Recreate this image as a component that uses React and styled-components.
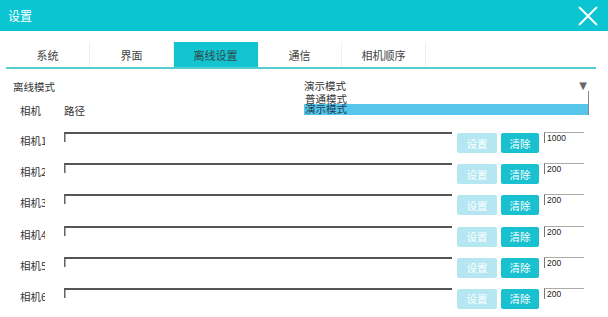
import React from "react";
import styled, { createGlobalStyle } from "styled-components";

const Global = createGlobalStyle`
  html, body { margin: 0; padding: 0; background: #fff; }
  body { font-family: "Noto Sans CJK SC", "Noto Sans", sans-serif; color: #333; }
`;

const Window = styled.div`
  width: 608px;
  height: 317px;
  overflow: hidden;
  background: #fff;
  display: flex;
  flex-direction: column;
`;

const TitleBar = styled.div`
  height: 31px;
  flex: none;
  background: #0cc5d2;
  display: flex;
  align-items: center;
  justify-content: space-between;
  padding: 0 10px 0 8px;
  box-sizing: border-box;
`;

const Title = styled.span`
  color: #fff;
  font-size: 12px;
  line-height: 1;
`;

const CloseBtn = styled.svg`
  width: 20px;
  height: 20px;
  display: block;
`;

const TabBar = styled.div`
  margin: 11px 0 0 6px;
  width: 590px;
  height: 25px;
  display: flex;
  border-bottom: 2px solid #55cdce;
  flex: none;
`;

const Tab = styled.div`
  width: 84px;
  height: 100%;
  display: flex;
  align-items: center;
  justify-content: center;
  font-size: 11px;
  color: ${p => (p.$active ? "#2f4a4d" : "#444")};
  background: ${p => (p.$active ? "#12c3d0" : "transparent")};
  border-right: 1px solid ${p => (p.$active ? "transparent" : "#f0f0f0")};
  box-sizing: border-box;
`;

const ModeRow = styled.div`
  position: relative;
  display: flex;
  align-items: center;
  height: 14px;
  margin-top: 11px;
  padding-left: 13px;
  font-size: 10.5px;
  flex: none;
`;

const ModeLabel = styled.span`
  width: 291px;
  line-height: 1;
`;

const Select = styled.div`
  position: relative;
  width: 284px;
  display: flex;
  align-items: center;
  justify-content: space-between;
  line-height: 1;
  margin-top: -2px;
`;

const Arrow = styled.span`
  color: #666;
  font-size: 10px;
  margin-right: 1px;
  font-family: "DejaVu Sans", sans-serif;
`;

const Dropdown = styled.div`
  position: absolute;
  left: 0;
  top: 10px;
  width: 284px;
  border-right: 1px solid #888;
  display: flex;
  flex-direction: column;
  z-index: 2;
`;

const Option = styled.div`
  height: ${p => (p.$selected ? "11px" : "13px")};
  display: flex;
  align-items: ${p => (p.$selected ? "center" : "flex-end")};
  font-size: 10.5px;
  line-height: 10px;
  color: ${p => (p.$selected ? "#1b3a52" : "#333")};
  background: ${p => (p.$selected ? "#55c6ea" : "#fff")};
  padding-left: 1px;
`;

const HeaderRow = styled.div`
  display: flex;
  align-items: center;
  height: 14px;
  margin-top: 10px;
  padding-left: 20px;
  font-size: 10.5px;
  flex: none;
`;

const HeaderCell = styled.span`
  width: ${p => p.$w}px;
  line-height: 1;
`;

const Rows = styled.div`
  display: grid;
  grid-auto-rows: 31.2px;
  margin-top: 14px;
  padding-left: 20px;
`;

const Row = styled.div`
  display: flex;
  align-items: flex-start;
`;

const CamLabel = styled.div`
  width: 25px;
  margin-right: 19px;
  overflow: hidden;
  white-space: nowrap;
  font-size: 10.5px;
  line-height: 1;
  margin-top: 4px;
`;

const PathInput = styled.div`
  width: 388px;
  height: 10px;
  border-top: 2px solid #555;
  border-left: 1px solid #666;
  box-shadow: inset 1px 0 0 #aaa;
  box-sizing: border-box;
`;

const Btn = styled.div`
  margin-top: 1px;
  height: 20px;
  border-radius: 2px;
  display: flex;
  align-items: center;
  justify-content: center;
  font-size: 10.5px;
  color: #fff;
  background: ${p => (p.$light ? "#b4e7f1" : "#19c0cf")};
  margin-left: ${p => p.$ml}px;
  width: ${p => p.$w}px;
  flex: none;
`;

const NumBox = styled.div`
  margin-left: 5px;
  width: 37px;
  height: 10px;
  border-top: 1px solid #aaa;
  border-left: 1px solid #777;
  font-family: "Liberation Sans", sans-serif;
  font-size: 8.5px;
  line-height: 10px;
  padding-left: 2px;
  color: #222;
  overflow: hidden;
  box-sizing: content-box;
  flex: none;
`;

const cams = [
  { n: 1, v: "1000" },
  { n: 2, v: "200" },
  { n: 3, v: "200" },
  { n: 4, v: "200" },
  { n: 5, v: "200" },
  { n: 6, v: "200" },
  { n: 7, v: "200" },
];

export default function App() {
  const tabs = ["系统", "界面", "离线设置", "通信", "相机顺序"];
  return (
    <>
      <Global />
      <Window>
        <TitleBar>
          <Title>设置</Title>
          <CloseBtn viewBox="0 0 20 20">
            <path d="M1 1 L19 19 M19 1 L1 19" stroke="#fff" strokeWidth="2" />
          </CloseBtn>
        </TitleBar>
        <TabBar>
          {tabs.map((t, i) => (
            <Tab key={t} $active={i === 2}>{t}</Tab>
          ))}
        </TabBar>
        <ModeRow>
          <ModeLabel>离线模式</ModeLabel>
          <Select>
            <span>演示模式</span>
            <Arrow>▼</Arrow>
            <Dropdown>
              <Option>普通模式</Option>
              <Option $selected>演示模式</Option>
            </Dropdown>
          </Select>
        </ModeRow>
        <HeaderRow>
          <HeaderCell $w={44}>相机</HeaderCell>
          <HeaderCell $w={60}>路径</HeaderCell>
        </HeaderRow>
        <Rows>
          {cams.map(c => (
            <Row key={c.n}>
              <CamLabel>相机{c.n}</CamLabel>
              <PathInput />
              <Btn $light $ml={5} $w={40}>设置</Btn>
              <Btn $ml={4} $w={38}>清除</Btn>
              <NumBox>{c.v}</NumBox>
            </Row>
          ))}
        </Rows>
      </Window>
    </>
  );
}
